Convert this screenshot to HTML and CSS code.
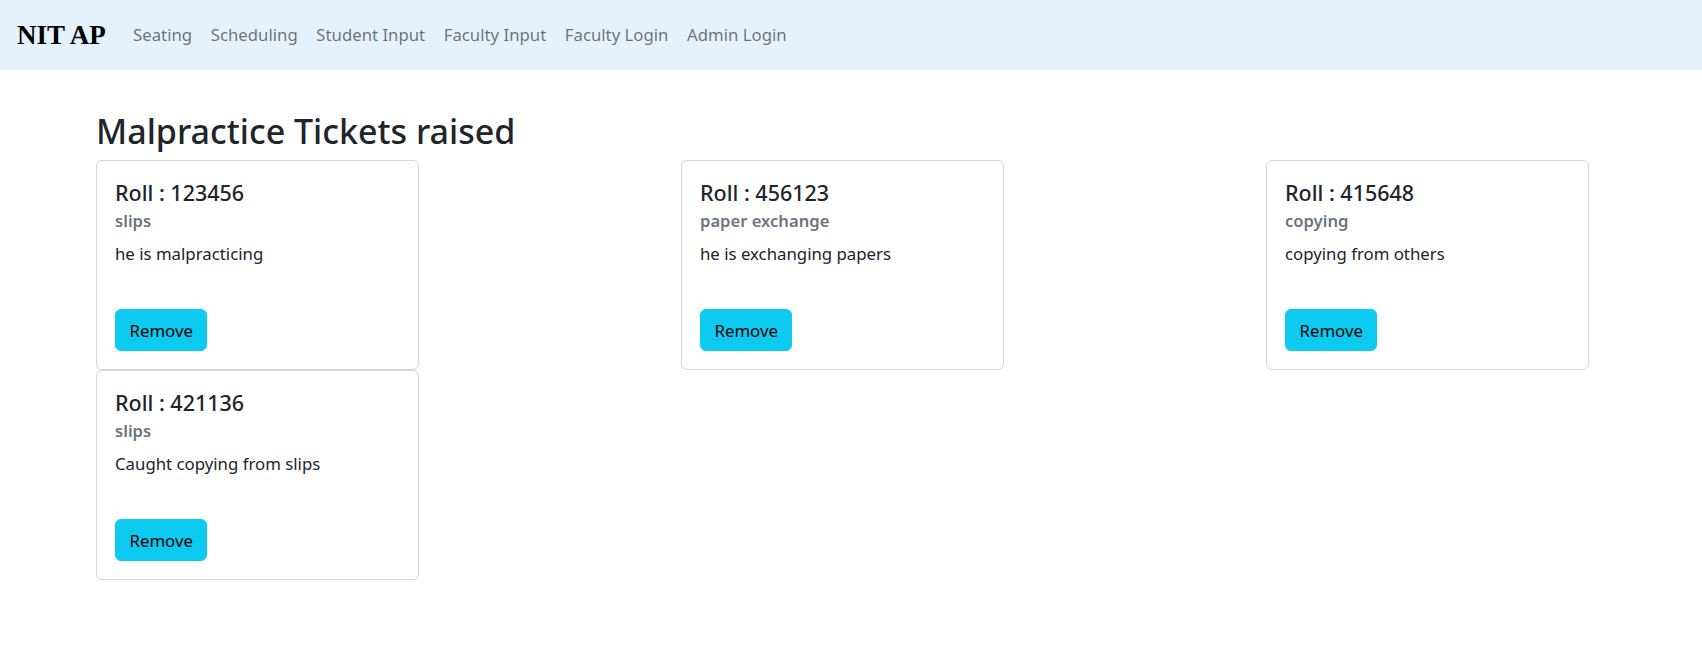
FILE: index.html
```html
<!DOCTYPE html>
<html lang="en">
<head>
<meta charset="utf-8">
<title>Malpractice Tickets</title>
<link rel="stylesheet" href="styles.css">
</head>
<body>
<nav class="navbar">
  <a class="brand" href="#">NIT AP</a>
  <ul class="nav-links">
    <li><a href="#">Seating</a></li>
    <li><a href="#">Scheduling</a></li>
    <li><a href="#">Student Input</a></li>
    <li><a href="#">Faculty Input</a></li>
    <li><a href="#">Faculty Login</a></li>
    <li><a href="#">Admin Login</a></li>
  </ul>
</nav>
<main class="page">
  <h1 class="page-title">Malpractice Tickets raised</h1>
  <div class="ticket-grid">
    <div class="card">
      <h5 class="card-title">Roll : 123456</h5>
      <h6 class="card-subtitle">slips</h6>
      <p class="card-text">he is malpracticing</p>
      <button class="btn-remove">Remove</button>
    </div>
    <div class="card">
      <h5 class="card-title">Roll : 456123</h5>
      <h6 class="card-subtitle">paper exchange</h6>
      <p class="card-text">he is exchanging papers</p>
      <button class="btn-remove">Remove</button>
    </div>
    <div class="card">
      <h5 class="card-title">Roll : 415648</h5>
      <h6 class="card-subtitle">copying</h6>
      <p class="card-text">copying from others</p>
      <button class="btn-remove">Remove</button>
    </div>
    <div class="card">
      <h5 class="card-title">Roll : 421136</h5>
      <h6 class="card-subtitle">slips</h6>
      <p class="card-text">Caught copying from slips</p>
      <button class="btn-remove">Remove</button>
    </div>
  </div>
</main>
</body>
</html>
```

FILE: styles.css
```css
* { box-sizing: border-box; }

body {
  margin: 0;
  font-family: "Noto Sans", "Open Sans", sans-serif;
  color: #212529;
  background: #fff;
}

.navbar {
  height: 70px;
  background: #e3f2fd;
  display: flex;
  align-items: center;
  padding: 0 0 0 17px;
}

.brand {
  font-family: "Liberation Serif", "Times New Roman", serif;
  font-weight: bold;
  font-size: 27px;
  color: #000;
  text-decoration: none;
  margin-right: 18px;
  line-height: 1;
}

.nav-links {
  display: flex;
  list-style: none;
  margin: 0;
  padding: 0;
}

.nav-links a {
  display: block;
  padding: 0 9.3px;
  font-size: 16.75px;
  line-height: 26px;
  color: rgba(0, 0, 0, 0.55);
  text-decoration: none;
}

.page {
  padding: 39px 0 0 96px;
}

.page-title {
  margin: 0 0 7px 0;
  font-size: 34px;
  font-weight: 500;
  line-height: 44px;
}

.ticket-grid {
  display: grid;
  grid-template-columns: repeat(3, 323px);
  column-gap: 262px;
}

.card {
  border: 1px solid #d6d6d6;
  border-radius: 6px;
  padding: 19px 18px 18px;
  height: 210px;
  display: flex;
  flex-direction: column;
  align-items: flex-start;
}

.card-title {
  margin: 0 0 4px 0;
  font-size: 21.5px;
  font-weight: 500;
  line-height: 26px;
}

.card-subtitle {
  margin: 0 0 10px 0;
  font-size: 16.6px;
  font-weight: 600;
  line-height: 21px;
  color: #6c757d;
}

.card-text {
  margin: 0;
  font-size: 16.8px;
  line-height: 26px;
}

.btn-remove {
  margin-top: auto;
  height: 42px;
  padding: 0 13.5px;
  font-family: inherit;
  font-size: 16.8px;
  color: #000;
  background: #0dcaf0;
  border: 1px solid #0dcaf0;
  border-radius: 6px;
  cursor: pointer;
}
```
